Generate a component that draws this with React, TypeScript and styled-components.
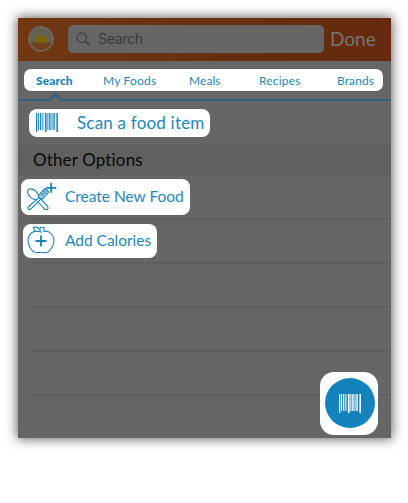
import React from "react";
import styled, { createGlobalStyle } from "styled-components";

const blue = "#1482bd";
const textBlue = "#1d87c0";

const GlobalStyle = createGlobalStyle`
  * { box-sizing: border-box; }
  body { margin: 0; background: #fff; font-family: Lato, "Open Sans", sans-serif; }
`;

const Page = styled.main`
  width: 408px;
  height: 503px;
  padding: 18px 17px 0 18px;
  overflow: hidden;
`;

const Screen = styled.div`
  position: relative;
  height: 420px;
  background: #666;
  box-shadow: 0 0 11px 1px rgba(0, 0, 0, 0.62);
`;

const Header = styled.header`
  display: flex;
  align-items: center;
  height: 43px;
  padding: 0 0 2px 10px;
  background: linear-gradient(90deg, #713812, #66300f 50%, #64290e);
`;

const SearchField = styled.div`
  display: flex;
  align-items: center;
  gap: 8px;
  width: 256px;
  height: 28px;
  margin-left: 14px;
  padding-left: 8px;
  border-radius: 5px;
  background: #666;
  color: #3b3b3d;
  font: 14px Inter, sans-serif;
  letter-spacing: -0.3px;
`;

const Done = styled.span`
  margin-left: 6px;
  color: #777470;
  font-size: 19px;
  letter-spacing: 0;
`;

const TabArea = styled.div`
  height: 48px;
  padding: 8px 8px 0 6px;
`;

const Tabs = styled.nav`
  display: grid;
  grid-template-columns: 67px 86px 70px 78px 40px;
  align-items: center;
  height: 22px;
  padding: 1px 0 0 12px;
  border-radius: 7px;
  background: #fff;
`;

const Tab = styled.span<{ $active?: boolean; $spacing: number }>`
  color: ${(p) => (p.$active ? blue : textBlue)};
  font-size: 12px;
  line-height: 16px;
  font-weight: ${(p) => (p.$active ? 900 : 400)};
  letter-spacing: ${(p) => p.$spacing}px;
  white-space: nowrap;
`;

const TabLine = styled.svg`
  display: block;
  width: 373px;
  height: 8px;
  margin: 2px 0 0 -6px;
`;

const ScanRow = styled.div`
  height: 36px;
  padding-left: 11px;
`;

const SectionTitle = styled.h2`
  height: 30px;
  margin: 0;
  padding-left: 15px;
  background: #606060;
  color: #080808;
  font-size: 17px;
  font-weight: 400;
  line-height: 29px;
  letter-spacing: 0.15px;
`;

const Options = styled.div`
  padding-top: 1px;
`;

const OptionRow = styled.div<{ $left: number }>`
  display: flex;
  align-items: center;
  height: 44px;
  padding: 0 0 3px ${(p) => p.$left}px;
  background: linear-gradient(#5c5c5c, #616161) 14px bottom / 359px 2px no-repeat;
`;

const Pill = styled.div<{ $width: number; $height: number; $size: number; $spacing: number }>`
  display: flex;
  align-items: center;
  width: ${(p) => p.$width}px;
  height: ${(p) => p.$height}px;
  padding-bottom: 1px;
  border-radius: 8px;
  background: #fff;
  color: ${textBlue};
  font-size: ${(p) => p.$size}px;
  letter-spacing: ${(p) => p.$spacing}px;
  white-space: nowrap;
`;

const IconSlot = styled.span<{ $width: number; $left: number }>`
  display: flex;
  flex: none;
  width: ${(p) => p.$width}px;
  padding-left: ${(p) => p.$left}px;
`;

const ScanButtonFrame = styled.div`
  position: absolute;
  right: 13px;
  bottom: 3px;
  display: grid;
  place-items: center;
  width: 58px;
  height: 63px;
  padding: 0 0 1px 1px;
  border-radius: 14px;
  background: #fff;
`;

const ScanButton = styled.button`
  display: grid;
  place-items: center;
  width: 50px;
  height: 50px;
  padding: 0;
  border: 0;
  border-radius: 50%;
  background: ${blue};
  color: #fff;
`;

const bars = [
  [0, 1.3, 19], [2.1, 1, 17], [4, 1.3, 17], [6.4, 1, 17], [8.9, 1.7, 19],
  [11.4, 1, 17], [13.2, 1.4, 17], [15.5, 1, 17], [17.4, 1.4, 17], [20.4, 1.6, 19],
];

function Barcode() {
  return (
    <svg width="22" height="19" viewBox="0 0 22 19" fill="currentColor">
      {bars.map(([x, w, h]) => <rect key={x} x={x} width={w} height={h} />)}
    </svg>
  );
}

function Sunrise() {
  return (
    <svg width="26" height="26" viewBox="0 0 26 26">
      <circle cx="13" cy="13" r="12.5" fill="#625f55" />
      <path d="M2 16.5A11.5 11.5 0 0 0 24 16.5Z" fill="#70411a" />
      <path d="M6 16.5a7 7 0 0 1 14 0Z" fill="#7a6400" />
      <path d="M5 11 3 10M8 8 6.5 5.5M13 7V4M18 8l1.5-2.5M21 11l2-1" stroke="#68633e" strokeWidth=".6" />
      <circle cx="13" cy="13" r="12" fill="none" stroke="#6e6b64" strokeWidth="1.3" />
    </svg>
  );
}

function Magnifier() {
  return (
    <svg width="14" height="14" viewBox="0 0 14 14" fill="none" stroke="#3d3d3f" strokeWidth="1.1">
      <circle cx="5.7" cy="5.7" r="4.8" />
      <path d="m9.2 9.2 4 4" strokeWidth="1.4" />
    </svg>
  );
}

function Utensils() {
  return (
    <svg width="31" height="30" viewBox="0 0 31 30" fill="none" stroke={blue} strokeWidth="1.1" strokeLinejoin="round">
      <path d="M12.6 15.2 21.1 24.8q1.8 2.3.4 3.5t-3.5-.8L9.8 18.5C7 18.5 4.2 16.5 2.6 13.7S1.1 9 3.4 8.1s5.8.9 7.5 3.2q1.4 1.9 1.7 3.9Z" />
      <path d="m13.7 15.8-11 9.7q-1.4 1.3-.3 2.6t2.6-.2l10.6-10.5" fill="#fff" />
      <path d="m12.7 14.1 6.6-6.6 3.5 3.7-5.3 5.8q-2.2 1.6-4 0t-.8-2.9Z" fill="#aed4e8" />
      <path d="m14.8 12 4 3.8M17 9.8l3.9 3.8M14.8 15.5l6.2-6.4" strokeWidth=".85" />
      <path d="M25.2 1.8v10M20.2 6.8h10" strokeWidth="1.8" />
    </svg>
  );
}

function Apple() {
  return (
    <svg width="28" height="28" viewBox="0 0 28 28" fill="none" stroke={blue} strokeWidth="1.05" strokeLinejoin="round">
      <path d="M14 6.1C9.8 4.4 6.4 5 3.8 7.5.6 10.7.3 16 2.3 20c1.7 3.3 4.4 7 7.7 6.7 2.9-.6 5.1-.6 8 0 3.3.3 6-3.4 7.7-6.7 2-4 1.7-9.3-1.5-12.5C21.6 5 18.2 4.4 14 6.1Z" />
      <path d="M13.4 5.9 12.8 3.2l.9-1.8h3.5q-.8 2 .2 4M12.8 3.2Q10.3.3 6.2 1.4L8 5.1q3 .2 5.3-.2Z" fill="#fff" />
      <path d="M14 9.5v11M8.5 15h11" strokeWidth="1.8" />
    </svg>
  );
}

export default function App() {
  return (
    <>
      <GlobalStyle />
      <Page>
        <Screen>
          <Header>
            <Sunrise />
            <SearchField><Magnifier />Search</SearchField>
            <Done>Done</Done>
          </Header>
          <TabArea>
            <Tabs>
              <Tab $active $spacing={0.1}>Search</Tab>
              <Tab $spacing={0.2}>My Foods</Tab>
              <Tab $spacing={0.05}>Meals</Tab>
              <Tab $spacing={0.2}>Recipes</Tab>
              <Tab $spacing={0.1}>Brands</Tab>
            </Tabs>
            <TabLine viewBox="0 0 373 8" fill="none" stroke="#1f6386">
              <path d="M0 6.7H32L37.5 1 43 6.7H373" strokeWidth="1.4" />
            </TabLine>
          </TabArea>
          <ScanRow>
            <Pill $width={181} $height={28} $size={17} $spacing={0.2}>
              <IconSlot $width={48} $left={7}><Barcode /></IconSlot>
              Scan a food item
            </Pill>
          </ScanRow>
          <SectionTitle>Other Options</SectionTitle>
          <Options>
            <OptionRow $left={3}>
              <Pill $width={169} $height={36} $size={15.5} $spacing={-0.02}>
                <IconSlot $width={44} $left={5}><Utensils /></IconSlot>
                Create New Food
              </Pill>
            </OptionRow>
            <OptionRow $left={5}>
              <Pill $width={134} $height={34} $size={15.5} $spacing={-0.02}>
                <IconSlot $width={42} $left={4}><Apple /></IconSlot>
                Add Calories
              </Pill>
            </OptionRow>
            <OptionRow $left={0} />
            <OptionRow $left={0} />
            <OptionRow $left={0} />
          </Options>
          <ScanButtonFrame>
            <ScanButton aria-label="Scan barcode"><Barcode /></ScanButton>
          </ScanButtonFrame>
        </Screen>
      </Page>
    </>
  );
}
